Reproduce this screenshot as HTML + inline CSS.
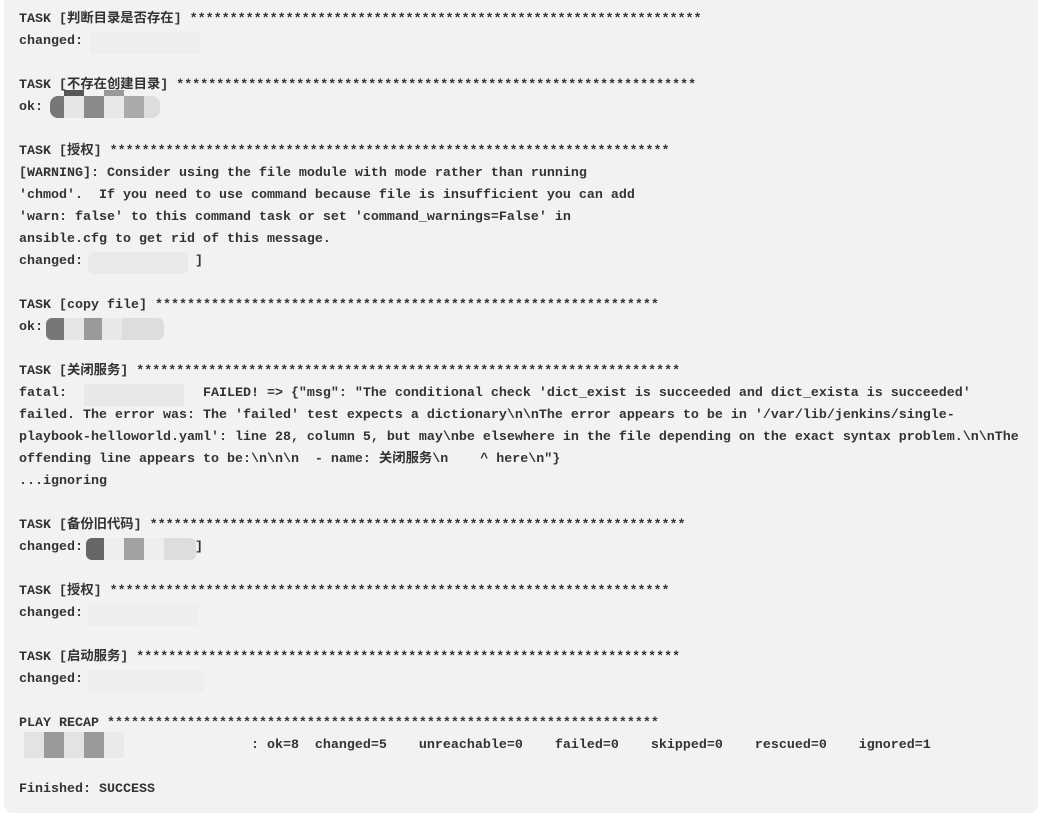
<!DOCTYPE html>
<html><head><meta charset="utf-8"><style>
html,body{margin:0;padding:0;background:#fff;width:1048px;height:836px;overflow:hidden}
.panel{position:absolute;left:4px;top:0;width:1034px;height:813px;background:#f2f2f2;border-radius:0 0 8px 8px}
pre{position:absolute;left:19px;top:0;margin:0;font-family:"Liberation Mono","Noto Sans CJK SC",monospace;font-weight:bold;font-size:13.33px;line-height:22px;color:#333;white-space:pre;padding-top:9px}
.b{position:absolute;height:22px}
</style></head><body>
<div class="panel"></div>
<pre>TASK [判断目录是否存在] ****************************************************************
changed: 

TASK [不存在创建目录] *****************************************************************
ok: 

TASK [授权] **********************************************************************
[WARNING]: Consider using the file module with mode rather than running
'chmod'.  If you need to use command because file is insufficient you can add
'warn: false' to this command task or set 'command_warnings=False' in
ansible.cfg to get rid of this message.
changed:              ]

TASK [copy file] ***************************************************************
ok: 

TASK [关闭服务] ********************************************************************
fatal:                 FAILED! => {"msg": "The conditional check 'dict_exist is succeeded and dict_exista is succeeded' 
failed. The error was: The 'failed' test expects a dictionary\n\nThe error appears to be in '/var/lib/jenkins/single-
playbook-helloworld.yaml': line 28, column 5, but may\nbe elsewhere in the file depending on the exact syntax problem.\n\nThe
offending line appears to be:\n\n\n  - name: 关闭服务\n    ^ here\n"}
...ignoring

TASK [备份旧代码] *******************************************************************
changed:              ]

TASK [授权] **********************************************************************
changed: 

TASK [启动服务] ********************************************************************
changed: 

PLAY RECAP *********************************************************************
                             : ok=8  changed=5    unreachable=0    failed=0    skipped=0    rescued=0    ignored=1   

Finished: SUCCESS</pre>
<div class="b" style="left:90px;top:32px;width:110px;background:#eeeeee"></div>
<div class="b" style="left:50px;top:96px;width:110px;background:linear-gradient(90deg,#777 0 14px,#e6e6e6 14px 34px,#8a8a8a 34px 54px,#e8e8e8 54px 74px,#aaa 74px 94px,#ddd 94px);border-radius:8px"></div>
<div class="b" style="left:64px;top:90px;width:90px;height:6px;background:linear-gradient(90deg,#555 0 20px,transparent 20px 40px,#999 40px 60px,transparent 60px)"></div>
<div class="b" style="left:88px;top:252px;width:100px;background:#e9e9e9;border-radius:6px"></div>
<div class="b" style="left:46px;top:318px;width:118px;background:linear-gradient(90deg,#777 0 18px,#e6e6e6 18px 38px,#9a9a9a 38px 56px,#e8e8e8 56px 76px,#ddd 76px);border-radius:6px"></div>
<div class="b" style="left:84px;top:384px;width:100px;background:#e8e8e8"></div>
<div class="b" style="left:86px;top:538px;width:110px;background:linear-gradient(90deg,#666 0 18px,#eee 18px 38px,#a2a2a2 38px 58px,#eee 58px 78px,#ddd 78px);border-radius:6px"></div>
<div class="b" style="left:88px;top:604px;width:110px;background:#eeeeee"></div>
<div class="b" style="left:88px;top:670px;width:116px;background:#eeeeee"></div>
<div class="b" style="left:24px;top:732px;width:100px;height:26px;background:linear-gradient(90deg,#e3e3e3 0 20px,#999 20px 40px,#e3e3e3 40px 60px,#999 60px 80px,#eaeaea 80px)"></div>
</body></html>
